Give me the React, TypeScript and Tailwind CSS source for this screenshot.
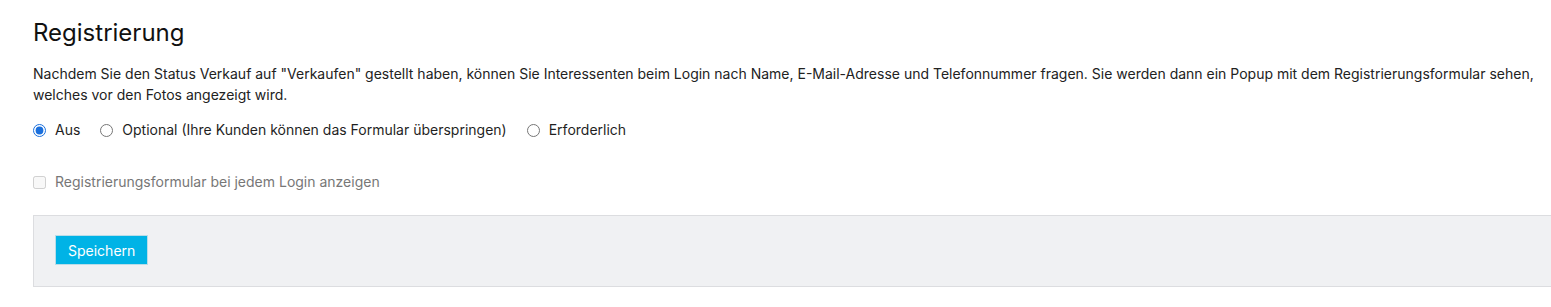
import { useState } from 'react'

const options = [
  { id: 'aus', label: 'Aus' },
  { id: 'optional', label: 'Optional (Ihre Kunden können das Formular überspringen)' },
  { id: 'required', label: 'Erforderlich' },
]

const App = () => {
  const [mode, setMode] = useState('aus')

  return (
    <div className="min-h-screen bg-white pl-[33px] pt-[17px] font-['Inter','Noto_Sans',sans-serif] text-[#1f1f1f]">
      <h1 className="text-[24px] leading-[32px] font-normal text-[#111]">Registrierung</h1>

      <p className="mt-[14px] text-[14px] leading-[21px] text-[#222]">
        Nachdem Sie den Status Verkauf auf "Verkaufen" gestellt haben, können Sie Interessenten beim Login nach Name,
        E-Mail-Adresse und Telefonnummer fragen. Sie werden dann ein Popup mit dem Registrierungsformular sehen,
        welches vor den Fotos angezeigt wird.
      </p>

      <div className="mt-[15px] flex items-center gap-[20px] text-[14px] leading-[20px]">
        {options.map((o) => (
          <label key={o.id} className="flex items-center gap-[9px] cursor-pointer">
            <input
              type="radio"
              name="reg"
              checked={mode === o.id}
              onChange={() => setMode(o.id)}
              className="m-0 h-[13px] w-[13px] accent-[#1a6fdc]"
            />
            <span>{o.label}</span>
          </label>
        ))}
      </div>

      <label className="mt-[32px] flex items-center gap-[9px] text-[14px] leading-[20px] text-[#777]">
        <input type="checkbox" disabled className="m-0 h-[13px] w-[13px]" />
        <span>Registrierungsformular bei jedem Login anzeigen</span>
      </label>

      <div className="mt-[23px] h-[72px] border border-r-0 border-[#dcdde0] bg-[#f0f1f3] pl-[21px] pt-[19px]">
        <button
          type="button"
          className="h-[30px] border border-[#b9dde8] bg-[#00b3e6] px-[12px] text-[14px] text-white"
        >
          Speichern
        </button>
      </div>
    </div>
  )
}

export default App
